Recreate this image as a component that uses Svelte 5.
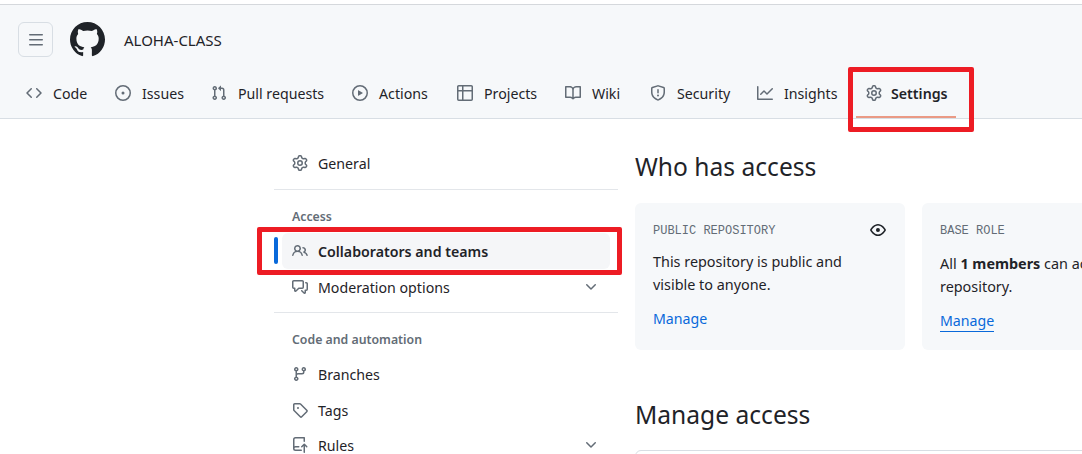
<script>
  const P = {
    code: 'm11.28 3.22 4.25 4.25a.75.75 0 0 1 0 1.06l-4.25 4.25a.749.749 0 0 1-1.275-.326.749.749 0 0 1 .215-.734L13.94 8l-3.72-3.72a.749.749 0 0 1 .326-1.275.749.749 0 0 1 .734.215Zm-6.56 0a.751.751 0 0 1 1.042.018.751.751 0 0 1 .018 1.042L2.06 8l3.72 3.72a.749.749 0 0 1-.326 1.275.749.749 0 0 1-.734-.215L.47 8.53a.75.75 0 0 1 0-1.06Z',
    issue: 'M8 9.5a1.5 1.5 0 1 0 0-3 1.5 1.5 0 0 0 0 3ZM8 0a8 8 0 1 1 0 16A8 8 0 0 1 8 0ZM1.5 8a6.5 6.5 0 1 0 13 0 6.5 6.5 0 0 0-13 0Z',
    pull: 'M1.5 3.25a2.25 2.25 0 1 1 3 2.122v5.256a2.251 2.251 0 1 1-1.5 0V5.372A2.25 2.25 0 0 1 1.5 3.25Zm5.677-.177L9.573.677A.25.25 0 0 1 10 .854V2.5h1A2.5 2.5 0 0 1 13.5 5v5.628a2.251 2.251 0 1 1-1.5 0V5a1 1 0 0 0-1-1h-1v1.646a.25.25 0 0 1-.427.177L7.177 3.427a.25.25 0 0 1 0-.354ZM3.75 2.5a.75.75 0 1 0 0 1.5.75.75 0 0 0 0-1.5Zm0 9.5a.75.75 0 1 0 0 1.5.75.75 0 0 0 0-1.5Zm8.25.75a.75.75 0 1 0 1.5 0 .75.75 0 0 0-1.5 0Z',
    play: 'M8 0a8 8 0 1 1 0 16A8 8 0 0 1 8 0ZM1.5 8a6.5 6.5 0 1 0 13 0 6.5 6.5 0 0 0-13 0Zm4.879-2.773 4.264 2.559a.25.25 0 0 1 0 .428l-4.264 2.559A.25.25 0 0 1 6 10.559V5.442a.25.25 0 0 1 .379-.215Z',
    table: 'M0 1.75C0 .784.784 0 1.75 0h12.5C15.216 0 16 .784 16 1.75v12.5A1.75 1.75 0 0 1 14.25 16H1.75A1.75 1.75 0 0 1 0 14.25ZM6.5 6.5v8h7.75a.25.25 0 0 0 .25-.25V6.5Zm8-1.5V1.75a.25.25 0 0 0-.25-.25H6.5V5Zm-13 1.5v7.75c0 .138.112.25.25.25H5v-8ZM5 5V1.5H1.75a.25.25 0 0 0-.25.25V5Z',
    book: 'M0 1.75A.75.75 0 0 1 .75 1h4.253c1.227 0 2.317.59 3 1.501A3.743 3.743 0 0 1 11.006 1h4.245a.75.75 0 0 1 .75.75v10.5a.75.75 0 0 1-.75.75h-4.507a2.25 2.25 0 0 0-1.591.659l-.622.621a.75.75 0 0 1-1.06 0l-.622-.621A2.25 2.25 0 0 0 5.258 13H.75a.75.75 0 0 1-.75-.75Zm7.251 10.324.004-5.073-.002-2.253A2.25 2.25 0 0 0 5.003 2.5H1.5v9h3.757a3.75 3.75 0 0 1 1.994.574ZM8.755 4.75l-.004 7.322a3.752 3.752 0 0 1 1.992-.572H14.5v-9h-3.495a2.25 2.25 0 0 0-2.25 2.25Z',
    shield: 'M7.467.133a1.748 1.748 0 0 1 1.066 0l5.25 1.68A1.75 1.75 0 0 1 15 3.48V7c0 1.566-.32 3.182-1.303 4.682-.983 1.498-2.585 2.813-5.032 3.855a1.697 1.697 0 0 1-1.33 0c-2.447-1.042-4.049-2.357-5.032-3.855C1.32 10.182 1 8.566 1 7V3.48a1.75 1.75 0 0 1 1.217-1.667Zm.61 1.429a.25.25 0 0 0-.153 0l-5.25 1.68a.25.25 0 0 0-.174.238V7c0 1.358.275 2.666 1.057 3.86.784 1.194 2.121 2.34 4.366 3.297a.196.196 0 0 0 .154 0c2.245-.956 3.582-2.104 4.366-3.298C13.225 9.666 13.5 8.36 13.5 7V3.48a.251.251 0 0 0-.174-.237l-5.25-1.68ZM8.75 4.75v3a.75.75 0 0 1-1.5 0v-3a.75.75 0 0 1 1.5 0ZM9 10.5a1 1 0 1 1-2 0 1 1 0 0 1 2 0Z',
    graph: 'M1.5 1.75V13.5h13.75a.75.75 0 0 1 0 1.5H.75a.75.75 0 0 1-.75-.75V1.75a.75.75 0 0 1 1.5 0Zm14.28 2.53-5.25 5.25a.75.75 0 0 1-1.06 0L7 7.06 4.28 9.78a.751.751 0 0 1-1.042-.018.751.751 0 0 1-.018-1.042l3.25-3.25a.75.75 0 0 1 1.06 0L10 7.94l4.72-4.72a.751.751 0 0 1 1.042.018.751.751 0 0 1 .018 1.042Z',
    gear: 'M8 0a8.2 8.2 0 0 1 .701.031C9.444.095 9.99.645 10.16 1.29l.288 1.107c.018.066.079.158.212.224.231.114.454.243.668.386.123.082.233.09.299.071l1.103-.303c.644-.176 1.392.021 1.82.63.27.385.506.792.704 1.218.315.675.111 1.422-.364 1.891l-.814.806c-.049.048-.098.147-.088.294.016.257.016.515 0 .772-.01.147.038.246.088.294l.814.806c.475.469.679 1.216.364 1.891a7.977 7.977 0 0 1-.704 1.217c-.428.61-1.176.807-1.82.63l-1.102-.302c-.067-.019-.177-.011-.3.071a5.909 5.909 0 0 1-.668.386c-.133.066-.194.158-.211.224l-.29 1.106c-.168.646-.715 1.196-1.458 1.26a8.006 8.006 0 0 1-1.402 0c-.743-.064-1.289-.614-1.458-1.26l-.289-1.106c-.018-.066-.079-.158-.212-.224a5.738 5.738 0 0 1-.668-.386c-.123-.082-.233-.09-.299-.071l-1.103.303c-.644.176-1.392-.021-1.82-.63a8.12 8.12 0 0 1-.704-1.218c-.315-.675-.111-1.422.363-1.891l.815-.806c.05-.048.098-.147.088-.294a6.214 6.214 0 0 1 0-.772c.01-.147-.038-.246-.088-.294l-.815-.806C.635 6.045.431 5.298.746 4.623a7.92 7.92 0 0 1 .704-1.217c.428-.61 1.176-.807 1.82-.63l1.102.302c.067.019.177.011.3-.071.214-.143.437-.272.668-.386.133-.066.194-.158.211-.224l.29-1.106C6.009.645 6.556.095 7.299.03 7.53.01 7.764 0 8 0Zm-.571 1.525c-.036.003-.108.036-.137.146l-.289 1.105c-.147.561-.549.967-.998 1.189-.173.086-.34.183-.5.29-.417.278-.97.423-1.529.27l-1.103-.303c-.109-.03-.175.016-.195.045-.22.312-.412.644-.573.99-.014.031-.021.11.059.19l.815.806c.411.406.562.957.53 1.456a4.709 4.709 0 0 0 0 .582c.032.499-.119 1.05-.53 1.456l-.815.806c-.081.08-.073.159-.059.19.162.346.353.677.573.989.02.03.085.076.195.046l1.102-.303c.56-.153 1.113-.008 1.53.27.161.107.328.204.501.29.447.222.85.629.997 1.189l.289 1.105c.029.109.101.143.137.146a6.6 6.6 0 0 0 1.142 0c.036-.003.108-.036.137-.146l.289-1.105c.147-.561.549-.967.998-1.189.173-.086.34-.183.5-.29.417-.278.97-.423 1.529-.27l1.103.303c.109.029.175-.016.195-.045.22-.313.411-.644.573-.99.014-.031.021-.11-.059-.19l-.815-.806c-.411-.406-.562-.957-.53-1.456a4.709 4.709 0 0 0 0-.582c-.032-.499.119-1.05.53-1.456l.815-.806c.081-.08.073-.159.059-.19a6.464 6.464 0 0 0-.573-.989c-.02-.03-.085-.076-.195-.046l-1.102.303c-.56.153-1.113.008-1.53-.27a4.44 4.44 0 0 0-.501-.29c-.447-.222-.85-.629-.997-1.189l-.289-1.105c-.029-.11-.101-.143-.137-.146a6.6 6.6 0 0 0-1.142 0ZM11 8a3 3 0 1 1-6 0 3 3 0 0 1 6 0ZM9.5 8a1.5 1.5 0 1 0-3.001.001A1.5 1.5 0 0 0 9.5 8Z',
    people: 'M2 5.5a3.5 3.5 0 1 1 5.898 2.549 5.508 5.508 0 0 1 3.034 4.084.75.75 0 1 1-1.482.235 4 4 0 0 0-7.9 0 .75.75 0 0 1-1.482-.236A5.507 5.507 0 0 1 3.102 8.05 3.493 3.493 0 0 1 2 5.5ZM11 4a3.001 3.001 0 0 1 2.22 5.018 5.01 5.01 0 0 1 2.56 3.012.749.749 0 0 1-.885.954.752.752 0 0 1-.549-.514 3.507 3.507 0 0 0-2.522-2.372.75.75 0 0 1-.574-.73v-.352a.75.75 0 0 1 .416-.672A1.5 1.5 0 0 0 11 5.5.75.75 0 0 1 11 4Zm-5.5-.5a2 2 0 1 0-.001 3.999A2 2 0 0 0 5.5 3.5Z',
    comment: 'M1.75 1h8.5c.966 0 1.75.784 1.75 1.75v5.5A1.75 1.75 0 0 1 10.25 10H7.061l-2.574 2.573A1.458 1.458 0 0 1 2 11.543V10h-.25A1.75 1.75 0 0 1 0 8.25v-5.5C0 1.784.784 1 1.75 1ZM1.5 2.75v5.5c0 .138.112.25.25.25h1a.75.75 0 0 1 .75.75v2.19l2.72-2.72a.749.749 0 0 1 .53-.22h3.5a.25.25 0 0 0 .25-.25v-5.5a.25.25 0 0 0-.25-.25h-8.5a.25.25 0 0 0-.25.25Zm13 2a.25.25 0 0 0-.25-.25h-.5a.75.75 0 0 1 0-1.5h.5c.966 0 1.75.784 1.75 1.75v5.5A1.75 1.75 0 0 1 14.25 12H14v1.543a1.458 1.458 0 0 1-2.487 1.03L9.22 12.28a.749.749 0 0 1 .326-1.275.749.749 0 0 1 .734.215l2.22 2.22v-2.19a.75.75 0 0 1 .75-.75h1a.25.25 0 0 0 .25-.25Z',
    branch: 'M9.5 3.25a2.25 2.25 0 1 1 3 2.122V6A2.5 2.5 0 0 1 10 8.5H6a1 1 0 0 0-1 1v1.128a2.251 2.251 0 1 1-1.5 0V5.372a2.25 2.25 0 1 1 1.5 0v1.836A2.493 2.493 0 0 1 6 7h4a1 1 0 0 0 1-1v-.628A2.25 2.25 0 0 1 9.5 3.25Zm-6 0a.75.75 0 1 0 1.5 0 .75.75 0 0 0-1.5 0Zm8.25-.75a.75.75 0 1 0 0 1.5.75.75 0 0 0 0-1.5ZM4.25 12a.75.75 0 1 0 0 1.5.75.75 0 0 0 0-1.5Z',
    tag: 'M1 7.775V2.75C1 1.784 1.784 1 2.75 1h5.025c.464 0 .91.184 1.238.513l6.25 6.25a1.75 1.75 0 0 1 0 2.474l-5.026 5.026a1.75 1.75 0 0 1-2.474 0l-6.25-6.25A1.752 1.752 0 0 1 1 7.775Zm1.5 0c0 .066.026.13.073.177l6.25 6.25a.25.25 0 0 0 .354 0l5.025-5.025a.25.25 0 0 0 0-.354l-6.25-6.25a.25.25 0 0 0-.177-.073H2.75a.25.25 0 0 0-.25.25ZM6 5a1 1 0 1 1 0 2 1 1 0 0 1 0-2Z',
    rules: 'M1 2.5A2.5 2.5 0 0 1 3.5 0h8.75a.75.75 0 0 1 .75.75v3.5a.75.75 0 0 1-1.5 0V1.5h-8a1 1 0 0 0-1 1v6.708A2.493 2.493 0 0 1 3.5 9h3.25a.75.75 0 0 1 0 1.5H3.5a1 1 0 0 0 0 2h5.75a.75.75 0 0 1 0 1.5H3.5A2.5 2.5 0 0 1 1 11.5Zm13.23 7.79h-.001l-1.224-1.224v6.184a.75.75 0 0 1-1.5 0V9.066L10.28 10.29a.75.75 0 0 1-1.06-1.061l2.505-2.504a.75.75 0 0 1 1.061 0L15.29 9.23a.751.751 0 0 1-.018 1.042.751.751 0 0 1-1.042.018Z',
    eye: 'M8 2c1.981 0 3.671.992 4.933 2.078 1.27 1.091 2.187 2.345 2.637 3.023a1.62 1.62 0 0 1 0 1.798c-.45.678-1.367 1.932-2.637 3.023C11.67 13.008 9.981 14 8 14c-1.981 0-3.671-.992-4.933-2.078C1.797 10.83.88 9.576.43 8.898a1.62 1.62 0 0 1 0-1.798c.45-.677 1.367-1.931 2.637-3.022C4.33 2.992 6.019 2 8 2ZM1.679 7.932a.12.12 0 0 0 0 .136c.411.622 1.241 1.75 2.366 2.717C5.176 11.758 6.527 12.5 8 12.5c1.473 0 2.825-.742 3.955-1.715 1.124-.967 1.954-2.096 2.366-2.717a.12.12 0 0 0 0-.136c-.412-.621-1.242-1.75-2.366-2.717C10.824 4.242 9.473 3.5 8 3.5c-1.473 0-2.825.742-3.955 1.715-1.124.967-1.954 2.096-2.366 2.717ZM8 10a2 2 0 1 1-.001-3.999A2 2 0 0 1 8 10Z',
    chevron: 'M12.78 5.22a.749.749 0 0 1 0 1.06l-4.25 4.25a.749.749 0 0 1-1.06 0L3.22 6.28a.749.749 0 1 1 1.06-1.06L8 8.939l3.72-3.719a.749.749 0 0 1 1.06 0Z',
    bars: 'M1 2.75A.75.75 0 0 1 1.75 2h12.5a.75.75 0 0 1 0 1.5H1.75A.75.75 0 0 1 1 2.75Zm0 5A.75.75 0 0 1 1.75 7h12.5a.75.75 0 0 1 0 1.5H1.75A.75.75 0 0 1 1 7.75ZM1.75 12h12.5a.75.75 0 0 1 0 1.5H1.75a.75.75 0 0 1 0-1.5Z',
    mark: 'M8 0c4.42 0 8 3.58 8 8a8.013 8.013 0 0 1-5.45 7.59c-.4.08-.55-.17-.55-.38 0-.27.01-1.13.01-2.2 0-.75-.25-1.23-.54-1.48 1.78-.2 3.65-.88 3.65-3.95 0-.88-.31-1.59-.82-2.15.08-.2.36-1.02-.08-2.12 0 0-.67-.22-2.2.82-.64-.18-1.32-.27-2-.27-.68 0-1.36.09-2 .27-1.53-1.03-2.2-.82-2.2-.82-.44 1.1-.16 1.92-.08 2.12-.51.56-.82 1.28-.82 2.15 0 3.06 1.86 3.75 3.64 3.95-.23.2-.44.55-.51 1.07-.46.21-1.61.55-2.33-.66-.15-.24-.6-.83-1.23-.82-.67.01-.27.38.01.53.34.19.73.9.82 1.13.16.45.68 1.31 2.69.94 0 .67.01 1.3.01 1.49 0 .21-.15.45-.55.38A7.995 7.995 0 0 1 0 8c0-4.42 3.58-8 8-8Z'
  };
  const tabs = [
    ['code', 'Code'], ['issue', 'Issues'], ['pull', 'Pull requests'], ['play', 'Actions'],
    ['table', 'Projects'], ['book', 'Wiki'], ['shield', 'Security'], ['graph', 'Insights']
  ];
</script>

{#snippet icon(name, cls = 'ic')}
  <svg class={cls} viewBox="0 0 16 16" aria-hidden="true"><path d={P[name]} /></svg>
{/snippet}

<div class="page">
  <header class="head">
    <div class="top">
      <button class="menu" aria-label="Menu">{@render icon('bars', 'bars')}</button>
      {@render icon('mark', 'logo')}
      <span class="owner">ALOHA-CLASS</span>
    </div>
    <nav class="tabs">
      {#each tabs as [i, label]}
        <a class="tab">{@render icon(i)}<span>{label}</span></a>
      {/each}
      <a class="tab current">
        {@render icon('gear')}<span>Settings</span>
        <i class="under"></i>
        <i class="redbox tabbox"></i>
      </a>
    </nav>
  </header>

  <div class="body">
    <aside class="side">
      <a class="row">{@render icon('gear')}<span>General</span></a>
      <hr class="rule-a" />
      <h3 class="group access">Access</h3>
      <a class="row active">
        <i class="bluebar"></i>
        {@render icon('people')}<span>Collaborators and teams</span>
        <i class="redbox rowbox"></i>
      </a>
      <a class="row">{@render icon('comment')}<span>Moderation options</span>{@render icon('chevron', 'chev')}</a>
      <hr class="rule-b" />
      <h3 class="group auto">Code and automation</h3>
      <a class="row">{@render icon('branch')}<span>Branches</span></a>
      <a class="row">{@render icon('tag')}<span>Tags</span></a>
      <a class="row last">{@render icon('rules')}<span>Rules</span>{@render icon('chevron', 'chev')}</a>
    </aside>

    <main class="main">
      <h2 class="title">Who has access</h2>
      <div class="cards">
        <section class="card">
          <div class="cap"><span>PUBLIC REPOSITORY</span>{@render icon('eye', 'eye')}</div>
          <p>This repository is public and<br />visible to anyone.</p>
          <a class="manage">Manage</a>
        </section>
        <section class="card second">
          <div class="cap"><span>BASE ROLE</span></div>
          <p>All <b>1 members</b> can access this<br />repository.</p>
          <a class="manage line">Manage</a>
        </section>
      </div>
      <h2 class="title lower">Manage access</h2>
      <div class="box"></div>
    </main>
  </div>
</div>

<style>
  :global(body) { margin: 0; background: #fff; }
  .page {
    width: 1082px; height: 454px; overflow: hidden; padding-top: 4px; box-sizing: border-box;
    font-family: "Noto Sans", "Open Sans", sans-serif; font-size: 14.2px; color: #1f2328; background: #fff;
  }
  a { color: inherit; text-decoration: none; }
  .head { height: 115px; box-sizing: border-box; background: #f6f8fa; border-top: 1px solid #d5d8dc; border-bottom: 1px solid #d8dee4; }
  .top { display: flex; align-items: center; height: 69px; padding: 0 0 0 18px; box-sizing: border-box; }
  .menu { width: 35px; height: 35px; padding: 0; display: flex; align-items: center; justify-content: center; background: #f6f8fa; border: 1px solid #d8dee4; border-radius: 6px; }
  .bars { width: 16px; height: 16px; fill: #636c76; }
  .logo { width: 35px; height: 35px; margin-left: 17px; fill: #1f2328; }
  .owner { margin-left: 19px; font-size: 15px; }
  .tabs { display: grid; grid-template-columns: 89px 96px 141px 105px 108px 85px 107px 109px 100px; padding-left: 26px; height: 44px; }
  .tab { display: flex; align-items: center; gap: 11px; height: 46px; margin-top: -4px; }
  .ic { width: 16px; height: 16px; flex: none; fill: #636c76; }
  .current { position: relative; font-weight: 600; gap: 9px; }
  .under { position: absolute; left: -10px; width: 100px; bottom: -2px; height: 2px; background: #ea9a85; }
  .redbox { position: absolute; box-sizing: border-box; border: 5px solid #ed1c24; border-radius: 2px; }
  .tabbox { left: -18px; top: -3px; width: 126px; height: 65px; }
  .body { display: flex; }
  .side { width: 344px; margin-left: 274px; flex: none; padding-top: 26px; }
  .row { position: relative; display: flex; align-items: center; gap: 10px; height: 36px; padding-left: 18px; border-radius: 6px; }
  .last { margin-top: -1px; }
  .chev { width: 16px; height: 16px; margin-left: auto; margin-right: 19px; fill: #636c76; }
  hr { border: 0; border-top: 1px solid #e3e6ea; margin: 0; }
  .rule-a { margin-top: 8px; }
  .group { margin: 0 0 0 18px; font-size: 12.3px; font-weight: 600; line-height: 18px; color: #636c76; }
  .access { margin-top: 18px; margin-bottom: 7px; }
  .active { font-weight: 600; background: #f5f6f8; margin-left: 8px; padding-left: 10px; margin-right: 8px; }
  .bluebar { position: absolute; left: -8px; top: 4px; width: 4px; height: 27px; border-radius: 2px; background: #0969da; }
  .rowbox { left: -25px; top: -6px; width: 365px; height: 48px; }
  .rule-b { margin-top: 7px; }
  .auto { margin-top: 18px; margin-bottom: 7px; }
  .main { margin-left: 17px; flex: none; width: 700px; }
  .title { margin: 0; font-size: 24.6px; font-weight: 400; line-height: 36px; padding-top: 30px; }
  .cards { display: flex; gap: 17px; margin-top: 18px; }
  .card { width: 270px; height: 147px; box-sizing: border-box; padding: 18px; background: #f6f8fa; border-radius: 6px; flex: none; }
  .second { width: 400px; }
  .cap { display: flex; justify-content: space-between; align-items: center; height: 20px; font: 12px/24px "Liberation Mono", monospace; color: #636c76; }
  .eye { width: 16px; height: 16px; fill: #1f2328; margin: -2px 1px 0 0; }
  .card p { margin: 9px 0 0; line-height: 23px; font-size: 14.4px; }
  .second p { margin-top: 11px; }
  .manage { display: inline-block; margin-top: 12px; color: #0969da; line-height: 22px; }
  .line { border-bottom: 1px solid #0969da; line-height: 21px; }
  .lower { padding-top: 47px; }
  .box { height: 40px; margin-top: 17px; border: 1px solid #d8dee4; border-radius: 6px; }
</style>
